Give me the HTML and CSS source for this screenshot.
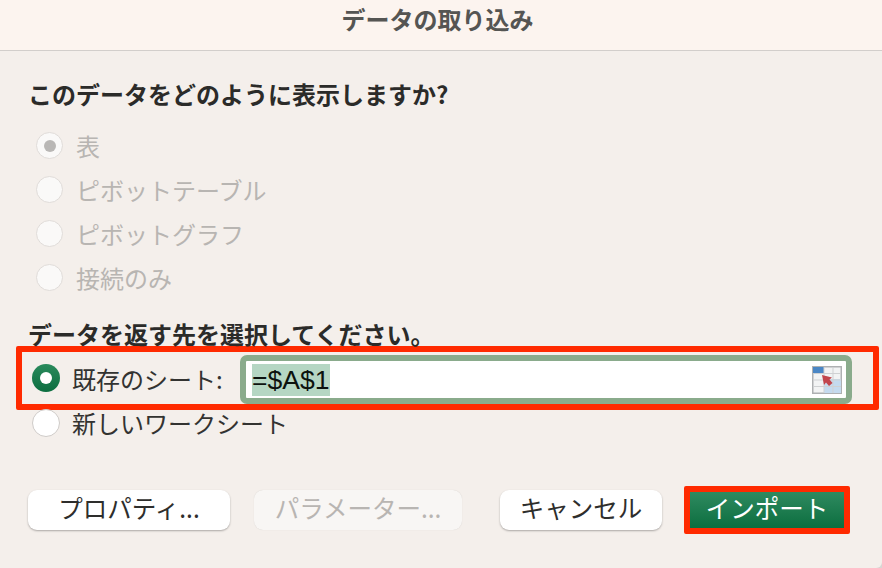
FILE: index.html
```html
<!DOCTYPE html>
<html lang="ja">
<head>
    <meta charset="UTF-8">
    <title>データの取り込み</title>
    <link rel="stylesheet" href="styles.css">
</head>
<body>
    <div class="dialog">
        <div class="title-bar">データの取り込み</div>

        <div class="content">
            <h2 class="section-title">このデータをどのように表示しますか?</h2>
            <div class="view-options">
                <div class="option disabled"><span class="radio checked"></span><span>表</span></div>
                <div class="option disabled"><span class="radio"></span><span>ピボットテーブル</span></div>
                <div class="option disabled"><span class="radio"></span><span>ピボットグラフ</span></div>
                <div class="option disabled"><span class="radio"></span><span>接続のみ</span></div>
            </div>

            <h2 class="section-title dest-title">データを返す先を選択してください。</h2>
            <div class="dest-row highlight">
                <span class="radio on"></span>
                <span class="dest-label">既存のシート:</span>
                <div class="range-input">
                    <span class="selected-text">=$A$1</span>
                    <svg class="range-icon" width="30" height="28" viewBox="0 0 30 28">
                        <rect x="0.750" y="0.750" width="28.500" height="26.500" fill="#f2f3f4" stroke="#aeb0b2" stroke-width="1.500"/>
                        <rect x="1" y="1" width="11" height="6.500" fill="#4a86c5"/>
                        <rect x="12" y="13" width="17" height="14" fill="#c4daee"/>
                        <path d="M1 7.500H29M1 14H29M1 20.500H29M12 1V27M21 1V27" stroke="#cfd1d3" fill="none"/>
                        <path d="M10 9L20 11.500L17.500 13.500L20.500 17L17 20L14 16.500L12 19Z" fill="#c2454c"/>
                    </svg>
                </div>
            </div>
            <div class="option new-sheet"><span class="radio"></span><span>新しいワークシート</span></div>

            <div class="buttons">
                <button class="btn btn-props">プロパティ...</button>
                <button class="btn btn-params" disabled>パラメーター...</button>
                <button class="btn btn-cancel">キャンセル</button>
                <div class="highlight import-wrap">
                    <button class="btn btn-import">インポート</button>
                </div>
            </div>
        </div>
    </div>
</body>
</html>
```

FILE: styles.css
```css
* {
    box-sizing: border-box;
}

body {
    margin: 0;
    background: #d8d6d3;
    font-family: "Noto Sans CJK JP", "Noto Sans", sans-serif;
    color: #333331;
}

.dialog {
    width: 882px;
    height: 568px;
    overflow: hidden;
    background: #f4efeb;
    border-bottom-right-radius: 6px;
}

.title-bar {
    height: 51px;
    padding: 0 7px 12px 0;
    display: flex;
    align-items: center;
    justify-content: center;
    background: #fcf4ef;
    border-bottom: 1px solid #d2cecb;
    font-size: 24px;
    font-weight: 700;
    color: #555553;
    line-height: 1;
}

.content {
    padding: 26px 0 0 16px;
}

.section-title {
    margin: 0 0 0 12px;
    font-size: 24px;
    line-height: 34px;
    font-weight: 700;
    color: #2b2b29;
}

.view-options {
    display: flex;
    flex-direction: column;
    gap: 17px;
    margin: 21px 0 0 20px;
}

.option {
    display: flex;
    align-items: center;
    height: 27px;
    font-size: 24px;
    gap: 13px;
}

.option.disabled {
    color: #b8b5b2;
}

.radio {
    width: 27px;
    height: 27px;
    flex: none;
    border-radius: 50%;
    background: #faf9f8;
    border: 1px solid #e0dcd9;
    display: flex;
    align-items: center;
    justify-content: center;
}

.radio.checked::after {
    content: "";
    width: 12px;
    height: 12px;
    border-radius: 50%;
    background: #b9b7b5;
}

.radio.on {
    width: 28px;
    height: 28px;
    border: none;
    background: linear-gradient(#2a8a5c, #0c6e40);
}

.radio.on::after {
    content: "";
    width: 12px;
    height: 12px;
    border-radius: 50%;
    background: #fff;
}

.dest-title {
    margin: 26px 0 0 12px;
}

.highlight {
    border: 6px solid #ff2a00;
    border-radius: 2px;
}

.dest-row {
    display: flex;
    align-items: center;
    width: 863px;
    height: 64px;
    margin-top: -5px;
    padding-left: 10px;
}

.dest-label {
    width: 180px;
    padding-left: 12px;
    font-size: 24px;
    flex: none;
}

.range-input {
    width: 612px;
    height: 49px;
    margin-top: 3px;
    display: flex;
    align-items: center;
    justify-content: space-between;
    padding: 0 4px 0 6px;
    background: #fff;
    border: 6px solid #8aab8c;
    border-radius: 7px;
}

.selected-text {
    width: 78px;
    height: 32px;
    background: #b5d6c3;
    color: #0c120e;
    font-family: "Liberation Sans", sans-serif;
    font-size: 26.500px;
    line-height: 33px;
}

.range-icon {
    display: block;
}

.new-sheet {
    margin: -1px 0 0 16px;
    color: #333331;
    gap: 12px;
}

.new-sheet .radio {
    width: 28px;
    height: 28px;
    background: #fff;
    border-color: #cfcbc8;
}

.buttons {
    display: flex;
    align-items: center;
    margin: 50px 0 0 12px;
}

.btn {
    height: 40px;
    padding: 0 0 3px;
    border: none;
    border-radius: 9px;
    background: #fff;
    box-shadow: 0 1px 2px rgba(0, 0, 0, 0.3);
    font-family: inherit;
    font-size: 24.500px;
    color: #2e2e2c;
    line-height: 1;
}

.btn-props {
    width: 202px;
}

.btn-params {
    width: 208px;
    margin-left: 24px;
    background: #f8f6f4;
    box-shadow: 0 0 1px rgba(0, 0, 0, 0.15);
    color: #b8b5b2;
}

.btn-cancel {
    width: 162px;
    margin-left: 38px;
}

.import-wrap {
    width: 166px;
    height: 48px;
    margin-left: 22px;
    flex: none;
}

.btn-import {
    display: block;
    width: 100%;
    height: 100%;
    border-radius: 0;
    box-shadow: none;
    background: linear-gradient(#2f8a60, #0c6e3f);
    color: #fff;
}
```
